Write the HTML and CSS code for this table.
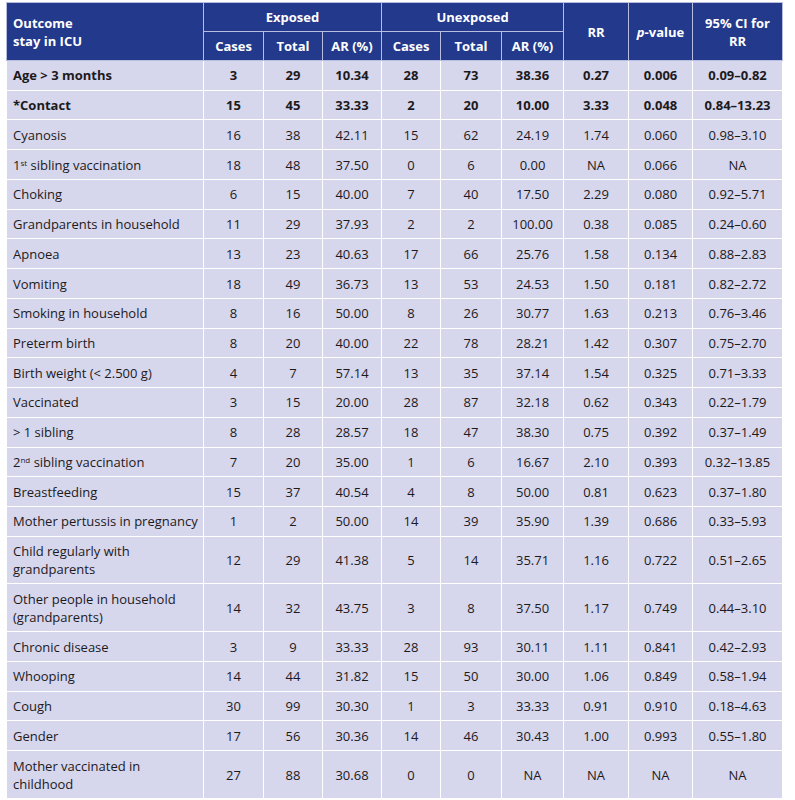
FILE: index.html
```html
<!DOCTYPE html>
<html lang="en">
<head>
  <meta charset="UTF-8" />
  <meta name="viewport" content="width=device-width, initial-scale=1.0"/>
  <title>Outcome stay in ICU</title>
  <link rel="stylesheet" href="styles.css">
</head>
<body>

  <table class="risk-table">
    <colgroup>
      <col class="c-label">
      <col class="c-60"><col class="c-59"><col class="c-59">
      <col class="c-59"><col class="c-61"><col class="c-62">
      <col class="c-65"><col class="c-64"><col class="c-90">
    </colgroup>
    <thead>
      <tr>
        <th class="label" rowspan="2">Outcome<br>stay in ICU</th>
        <th colspan="3">Exposed</th>
        <th colspan="3">Unexposed</th>
        <th rowspan="2">RR</th>
        <th rowspan="2"><i>p</i>-value</th>
        <th rowspan="2">95% CI for<br>RR</th>
      </tr>
      <tr>
        <th>Cases</th><th>Total</th><th>AR (%)</th>
        <th>Cases</th><th>Total</th><th>AR (%)</th>
      </tr>
    </thead>
    <tbody>
      <tr class="bold"><td>Age &gt; 3 months</td><td>3</td><td>29</td><td>10.34</td><td>28</td><td>73</td><td>38.36</td><td>0.27</td><td>0.006</td><td>0.09–0.82</td></tr>
      <tr class="bold"><td>*Contact</td><td>15</td><td>45</td><td>33.33</td><td>2</td><td>20</td><td>10.00</td><td>3.33</td><td>0.048</td><td>0.84–13.23</td></tr>
      <tr><td>Cyanosis</td><td>16</td><td>38</td><td>42.11</td><td>15</td><td>62</td><td>24.19</td><td>1.74</td><td>0.060</td><td>0.98–3.10</td></tr>
      <tr><td>1<sup>st</sup> sibling vaccination</td><td>18</td><td>48</td><td>37.50</td><td>0</td><td>6</td><td>0.00</td><td>NA</td><td>0.066</td><td>NA</td></tr>
      <tr><td>Choking</td><td>6</td><td>15</td><td>40.00</td><td>7</td><td>40</td><td>17.50</td><td>2.29</td><td>0.080</td><td>0.92–5.71</td></tr>
      <tr><td>Grandparents in household</td><td>11</td><td>29</td><td>37.93</td><td>2</td><td>2</td><td>100.00</td><td>0.38</td><td>0.085</td><td>0.24–0.60</td></tr>
      <tr><td>Apnoea</td><td>13</td><td>23</td><td>40.63</td><td>17</td><td>66</td><td>25.76</td><td>1.58</td><td>0.134</td><td>0.88–2.83</td></tr>
      <tr><td>Vomiting</td><td>18</td><td>49</td><td>36.73</td><td>13</td><td>53</td><td>24.53</td><td>1.50</td><td>0.181</td><td>0.82–2.72</td></tr>
      <tr><td>Smoking in household</td><td>8</td><td>16</td><td>50.00</td><td>8</td><td>26</td><td>30.77</td><td>1.63</td><td>0.213</td><td>0.76–3.46</td></tr>
      <tr><td>Preterm birth</td><td>8</td><td>20</td><td>40.00</td><td>22</td><td>78</td><td>28.21</td><td>1.42</td><td>0.307</td><td>0.75–2.70</td></tr>
      <tr><td>Birth weight (&lt; 2.500 g)</td><td>4</td><td>7</td><td>57.14</td><td>13</td><td>35</td><td>37.14</td><td>1.54</td><td>0.325</td><td>0.71–3.33</td></tr>
      <tr><td>Vaccinated</td><td>3</td><td>15</td><td>20.00</td><td>28</td><td>87</td><td>32.18</td><td>0.62</td><td>0.343</td><td>0.22–1.79</td></tr>
      <tr><td>&gt; 1 sibling</td><td>8</td><td>28</td><td>28.57</td><td>18</td><td>47</td><td>38.30</td><td>0.75</td><td>0.392</td><td>0.37–1.49</td></tr>
      <tr><td>2<sup>nd</sup> sibling vaccination</td><td>7</td><td>20</td><td>35.00</td><td>1</td><td>6</td><td>16.67</td><td>2.10</td><td>0.393</td><td>0.32–13.85</td></tr>
      <tr><td>Breastfeeding</td><td>15</td><td>37</td><td>40.54</td><td>4</td><td>8</td><td>50.00</td><td>0.81</td><td>0.623</td><td>0.37–1.80</td></tr>
      <tr><td>Mother pertussis in pregnancy</td><td>1</td><td>2</td><td>50.00</td><td>14</td><td>39</td><td>35.90</td><td>1.39</td><td>0.686</td><td>0.33–5.93</td></tr>
      <tr><td>Child regularly with<br>grandparents</td><td>12</td><td>29</td><td>41.38</td><td>5</td><td>14</td><td>35.71</td><td>1.16</td><td>0.722</td><td>0.51–2.65</td></tr>
      <tr><td>Other people in household<br>(grandparents)</td><td>14</td><td>32</td><td>43.75</td><td>3</td><td>8</td><td>37.50</td><td>1.17</td><td>0.749</td><td>0.44–3.10</td></tr>
      <tr><td>Chronic disease</td><td>3</td><td>9</td><td>33.33</td><td>28</td><td>93</td><td>30.11</td><td>1.11</td><td>0.841</td><td>0.42–2.93</td></tr>
      <tr><td>Whooping</td><td>14</td><td>44</td><td>31.82</td><td>15</td><td>50</td><td>30.00</td><td>1.06</td><td>0.849</td><td>0.58–1.94</td></tr>
      <tr><td>Cough</td><td>30</td><td>99</td><td>30.30</td><td>1</td><td>3</td><td>33.33</td><td>0.91</td><td>0.910</td><td>0.18–4.63</td></tr>
      <tr><td>Gender</td><td>17</td><td>56</td><td>30.36</td><td>14</td><td>46</td><td>30.43</td><td>1.00</td><td>0.993</td><td>0.55–1.80</td></tr>
      <tr><td>Mother vaccinated in<br>childhood</td><td>27</td><td>88</td><td>30.68</td><td>0</td><td>0</td><td>NA</td><td>NA</td><td>NA</td><td>NA</td></tr>
    </tbody>
  </table>

</body>
</html>
```

FILE: styles.css
```css
body {
  margin: 0;
  padding: 2px 6px;
  background: #ffffff;
  font-family: 'Open Sans', sans-serif;
}

.risk-table {
  width: 777px;
  border-collapse: collapse;
  table-layout: fixed;
  font-size: 13px;
  color: #1d1a1b;
}

.c-label { width: 197px; }
.c-60 { width: 60px; }
.c-59 { width: 59px; }
.c-61 { width: 61px; }
.c-62 { width: 62px; }
.c-65 { width: 65px; }
.c-64 { width: 64px; }
.c-90 { width: 90px; }

th {
  background: #22398c;
  color: #ffffff;
  font-weight: bold;
  line-height: 18px;
  padding: 5px 4px;
  text-align: center;
  border: 1px solid #b8bde0;
}

th.label {
  text-align: left;
  padding-left: 6px;
}

td {
  background: #d6d6ed;
  line-height: 18px;
  padding: 5.4px 4px 5.35px;
  text-align: center;
  border: 1px solid #ffffff;
}

td:first-child {
  text-align: left;
  padding-left: 6px;
}

.bold td {
  font-weight: bold;
}

sup {
  font-size: 8px;
  line-height: 0;
  vertical-align: 4px;
}
```
